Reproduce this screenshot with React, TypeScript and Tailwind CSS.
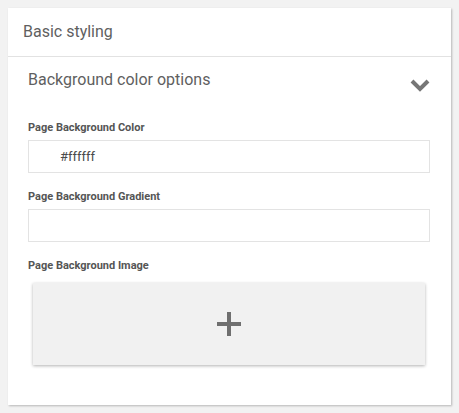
import React from 'react';

const fields = [
  { label: 'Page Background Color', value: '#ffffff' },
  { label: 'Page Background Gradient', value: '' },
];

const Label: React.FC<{ children: React.ReactNode }> = ({ children }) => (
  <div className="text-[11px] leading-[13px] font-bold text-[#555555]">{children}</div>
);

export default function App() {
  return (
    <div className="min-h-[413px] bg-[#f2f2f2] p-2 font-['Roboto',sans-serif]">
      <div className="h-[397px] w-[443px] bg-white shadow-[1px_1px_2px_rgba(0,0,0,0.25)]">
        {/* Header */}
        <div className="flex h-[49px] items-center border-b border-[#e2e2e2] pl-[15px] text-[16px] text-[#5f5f5f]">
          Basic styling
        </div>

        {/* Section */}
        <div className="pl-[20px] pr-[21px]">
          <div className="flex items-start justify-between pt-[11px]">
            <div className="text-[16px] leading-[24px] text-[#5f5f5f]">Background color options</div>
            <svg width="20" height="14" viewBox="0 0 20 14" className="mt-[10px]">
              <path d="M2 3 L10 11 L18 3" fill="none" stroke="#767676" strokeWidth="4" />
            </svg>
          </div>

          <div className="mt-[29px] flex flex-col gap-[17px]">
            {fields.map((f) => (
              <div key={f.label}>
                <Label>{f.label}</Label>
                <div className="mt-[6px] flex h-[33px] items-center border border-[#e3e3e3] pl-[31px] text-[13px] text-[#4a4a4a]">
                  {f.value}
                </div>
              </div>
            ))}
            <div>
              <Label>Page Background Image</Label>
              <div className="mx-[5px] mt-[11px] flex h-[82px] items-center justify-center bg-[#f1f1f1] shadow-[0_1px_3px_rgba(0,0,0,0.3)]">
                <svg width="24" height="24" viewBox="0 0 24 24">
                  <path d="M12 0 V24 M0 12 H24" stroke="#6f6f6f" strokeWidth="4" />
                </svg>
              </div>
            </div>
          </div>
        </div>
      </div>
    </div>
  );
}
